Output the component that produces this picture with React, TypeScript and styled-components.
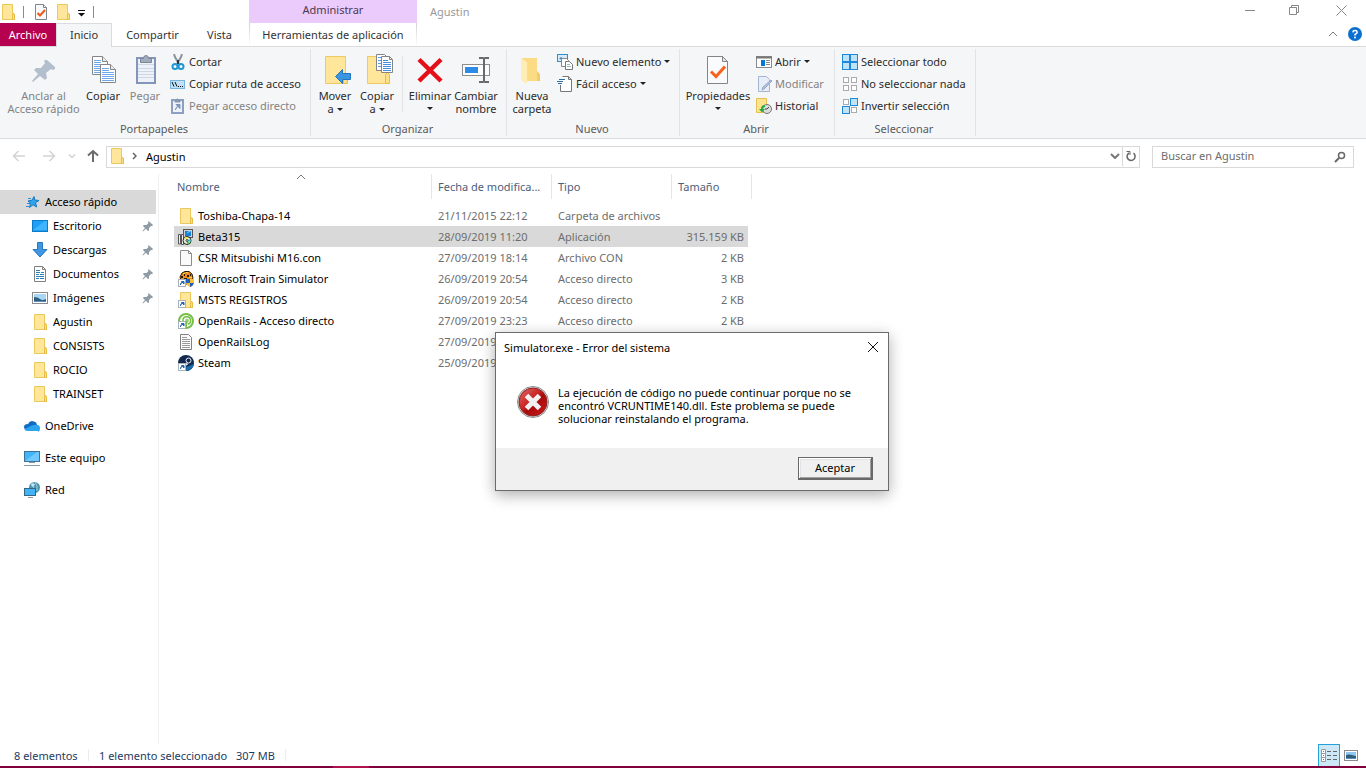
import React from 'react';
import styled, { createGlobalStyle, css } from 'styled-components';

const font = '"Noto Sans", "Open Sans", sans-serif';

const Global = createGlobalStyle`
  *, *::before, *::after { box-sizing: border-box; }
  html, body { margin: 0; height: 100%; background: #fff; }
  body { font: 11px/13px ${font}; color: #000; }
  #root { min-height: 100%; }
  button { font: inherit; color: inherit; background: none; border: 0; padding: 0; margin: 0; cursor: default; }
  a { color: inherit; text-decoration: none; cursor: default; }
  svg { display: block; flex: none; }
`;

/* ---------- window frame ---------- */

const Window = styled.div`
  display: flex;
  flex-direction: column;
  min-height: 100vh;
  position: relative;
  overflow: hidden;
  background: #fff;
`;

const Head = styled.header`
  display: flex;
  height: 46px;
`;

const HeadLeft = styled.div`
  display: flex;
  flex-direction: column;
  width: 249px;
`;

const QuickBar = styled.div`
  display: flex;
  align-items: center;
  height: 23px;
`;

const QuickButton = styled.button<{ $gap?: number }>`
  margin-left: ${(p) => p.$gap ?? 0}px;
`;

const QuickSep = styled.span<{ $gap: number }>`
  width: 1px;
  height: 12px;
  margin-left: ${(p) => p.$gap}px;
  background: #8a8a8a;
`;

const Tabs = styled.div`
  display: flex;
  height: 24px;
  margin-bottom: -1px;
  z-index: 1;
`;

const Tab = styled.button<{ $kind?: 'file' | 'active'; $width: number }>`
  width: ${(p) => p.$width}px;
  height: 23px;
  color: #333;
  ${(p) =>
    p.$kind === 'file' &&
    css`
      background: #b60050;
      color: #fff;
    `}
  ${(p) =>
    p.$kind === 'active' &&
    css`
      height: 24px;
      padding-bottom: 2px;
      background: #f5f6f7;
      border: 1px solid #dadbdc;
      border-bottom: 0;
    `}
`;

const ContextTab = styled.div`
  width: 168px;
  display: flex;
  flex-direction: column;
`;

const ContextTitle = styled.div`
  height: 23px;
  background: #ebcbfb;
  color: #4a3a52;
  text-align: center;
  line-height: 19px;
`;

const ContextButton = styled.button`
  height: 23px;
  color: #333;
  border: solid transparent;
  border-width: 0 1px;
  border-image: linear-gradient(#cfcfcf, #f7f7f7 80%, #fff) 1;
`;

const HeadRight = styled.div`
  flex: 1;
  display: flex;
  flex-direction: column;
`;

const Caption = styled.div`
  display: flex;
  justify-content: space-between;
  height: 23px;
  padding-left: 13px;
`;

const CaptionTitle = styled.h1`
  margin: 0;
  font-size: 11px;
  font-weight: 400;
  line-height: 23px;
  color: #999;
`;

const CaptionButtons = styled.div`
  display: flex;
`;

const CaptionButton = styled.button`
  width: 44px;
  height: 20px;
  display: grid;
  place-items: center;
  &:last-child { width: 50px; }
`;

const RibbonTools = styled.div`
  display: flex;
  justify-content: flex-end;
  align-items: center;
  gap: 10px;
  height: 23px;
  padding: 0 4px 2px 0;
`;

/* ---------- ribbon ---------- */

const Ribbon = styled.div`
  display: flex;
  height: 93px;
  padding-top: 2px;
  background: #f5f6f7;
  border: solid #dadbdc;
  border-width: 1px 0;
`;

const Group = styled.section<{ $width: number }>`
  display: flex;
  flex-direction: column;
  width: ${(p) => p.$width}px;
  height: 87px;
  border-right: 1px solid #e2e3e4;
`;

const GroupBody = styled.div<{ $pad: number }>`
  display: flex;
  height: 68px;
  padding: 2px 0 0 ${(p) => p.$pad}px;
`;

const GroupLabel = styled.div`
  height: 19px;
  padding-right: 2px;
  line-height: 23px;
  text-align: center;
  color: #5a5a5a;
`;

const Big = styled.button<{ $width: number; $off?: boolean }>`
  display: flex;
  flex-direction: column;
  align-items: center;
  gap: 3px;
  width: ${(p) => p.$width}px;
  padding-top: 3px;
  color: ${(p) => (p.$off ? '#838383' : '#2b2b2b')};
  white-space: nowrap;
`;

const BigLabel = styled.span`
  line-height: 13px;
`;

const Divider = styled.span`
  width: 1px;
  height: 56px;
  margin: 5px 4px 0;
  background: #e2e3e4;
`;

const SmallList = styled.div`
  display: flex;
  flex-direction: column;
  align-items: flex-start;
  margin-left: 4px;
`;

const Small = styled.button<{ $off?: boolean }>`
  display: flex;
  align-items: center;
  gap: 3px;
  height: 22px;
  color: ${(p) => (p.$off ? '#838383' : '#2b2b2b')};
  white-space: nowrap;
`;

const SmallLabel = styled.span`
  padding-bottom: 2px;
`;

const Caret = styled.i`
  display: inline-block;
  vertical-align: middle;
  margin: 0 0 2px 3px;
  border: solid transparent;
  border-width: 3px 3px 0;
  border-top-color: #222;
`;

const LoneCaret = styled(Caret)`
  display: block;
  width: 6px;
  margin: 5px auto 0;
`;

/* ---------- address row ---------- */

const AddressRow = styled.div`
  display: flex;
  align-items: center;
  height: 35px;
  padding: 0 12px;
`;

const NavButtons = styled.div`
  display: flex;
  align-items: center;
  width: 94px;
`;

const NavButton = styled.button<{ $width: number }>`
  width: ${(p) => p.$width}px;
  padding-bottom: 2px;
`;

const AddressBox = styled.div`
  flex: 1;
  display: flex;
  align-items: center;
  height: 22px;
  border: 1px solid #d9d9d9;
  padding: 0 0 1px 2px;
`;

const Crumb = styled.a`
  flex: 1;
  padding-left: 9px;
`;

const BoxButton = styled.button<{ $line?: boolean }>`
  width: ${(p) => (p.$line ? 17 : 15)}px;
  height: 20px;
  display: grid;
  place-items: center;
  border-left: ${(p) => (p.$line ? '1px solid #d9d9d9' : '0')};
`;

const SearchBox = styled.label`
  display: flex;
  align-items: center;
  width: 202px;
  height: 22px;
  margin-left: 12px;
  padding: 0 7px 0 8px;
  border: 1px solid #d9d9d9;
`;

const SearchInput = styled.input`
  flex: 1;
  min-width: 0;
  height: 20px;
  border: 0;
  padding: 0 0 2px;
  outline: 0;
  font: 11px/16px ${font};
  background: none;
  &::placeholder { color: #6d6d6d; opacity: 1; }
`;

/* ---------- body ---------- */

const Body = styled.div`
  flex: 1;
  display: flex;
`;

const Side = styled.nav`
  width: 159px;
  padding-top: 16px;
  border-right: 1px solid #f0f0f0;
`;

const SideLink = styled.a<{ $level: number; $selected?: boolean; $apart?: boolean }>`
  display: flex;
  align-items: center;
  gap: 5px;
  height: 24px;
  width: 156px;
  margin-top: ${(p) => (p.$apart ? 8 : 0)}px;
  padding: 0 2px 0 ${(p) => 24 + p.$level * 8}px;
  background: ${(p) => (p.$selected ? '#d9d9d9' : 'transparent')};
`;

const SideText = styled.span`
  flex: 1;
  padding-bottom: 2px;
  white-space: nowrap;
`;

const Main = styled.main`
  flex: 1;
  padding-left: 15px;
`;

const Files = styled.table`
  width: 574px;
  border-collapse: collapse;
  table-layout: fixed;
`;

const Th = styled.th<{ $width: number; $first?: boolean; $last?: boolean }>`
  position: relative;
  width: ${(p) => p.$width}px;
  height: 26px;
  padding: 0 0 2px ${(p) => (p.$first ? 3 : 6)}px;
  font-weight: 400;
  text-align: left;
  color: #4c607a;
  white-space: nowrap;
  &::after {
    content: '';
    position: absolute;
    top: 0;
    right: ${(p) => (p.$last ? -4 : 0)}px;
    width: 1px;
    height: 25px;
    background: #e5e5e5;
  }
`;

const SortMark = styled.span`
  position: absolute;
  top: 0;
  left: 0;
  right: 4px;
  display: grid;
  justify-content: center;
`;

const Tbody = styled.tbody`
  &::before { content: ''; display: block; height: 5px; }
`;

const Row = styled.tr<{ $selected?: boolean }>`
  height: 21px;
  background: ${(p) => (p.$selected ? '#d9d9d9' : 'transparent')};
`;

const Td = styled.td<{ $right?: boolean }>`
  padding: 0 4px 0 6px;
  color: #6d6d6d;
  text-align: ${(p) => (p.$right ? 'right' : 'left')};
  white-space: nowrap;
`;

const NameCell = styled.td`
  padding: 0 0 0 4px;
`;

const NameWrap = styled.div`
  display: flex;
  align-items: center;
  gap: 4px;
  height: 21px;
`;

/* ---------- status bar ---------- */

const Status = styled.footer`
  display: flex;
  align-items: center;
  height: 22px;
  padding: 0 4px 0 14px;
  color: #1e3a5f;
`;

const StatusText = styled.span<{ $width: number }>`
  width: ${(p) => p.$width}px;
  white-space: nowrap;
`;

const StatusSep = styled.span`
  width: 1px;
  height: 12px;
  margin-right: 10px;
  background: #ececec;
`;

const ViewButtons = styled.div`
  display: flex;
  margin-left: auto;
`;

const ViewButton = styled.button<{ $on?: boolean }>`
  display: grid;
  place-items: center;
  width: 22px;
  height: 22px;
  background: ${(p) => (p.$on ? '#cce8f6' : 'transparent')};
  border: ${(p) => (p.$on ? '1px solid #26a0da' : '0')};
  border-bottom: 0;
`;

const TaskEdge = styled.div`
  height: 2px;
  background: linear-gradient(90deg, #7f003c 333px, #b1104f 333px, #b1104f 369px, #7f003c 369px);
`;

/* ---------- dialog ---------- */

const Dialog = styled.div`
  position: absolute;
  left: 495px;
  top: 332px;
  width: 394px;
  display: flex;
  flex-direction: column;
  background: #fff;
  border: 1px solid #6b6b6b;
  box-shadow: 0 4px 14px rgba(0, 0, 0, 0.32);
`;

const DialogHead = styled.div`
  display: flex;
  align-items: center;
  justify-content: space-between;
  height: 28px;
  padding: 0 9px 0 8px;
`;

const DialogTitle = styled.h2`
  margin: 0;
  font-size: 11px;
  font-weight: 400;
`;

const DialogBody = styled.div`
  display: flex;
  gap: 9px;
  height: 87px;
  padding: 25px 21px 0;
`;

const Message = styled.p`
  margin: 0;
  width: 310px;
  line-height: 13px;
  white-space: nowrap;
`;

const DialogFoot = styled.div`
  display: flex;
  justify-content: flex-end;
  height: 42px;
  padding: 9px 15px 0;
  background: #f0f0f0;
`;

const OkButton = styled.button`
  width: 75px;
  height: 23px;
  padding-bottom: 1px;
  background: #f0f0f0;
  border: 1px solid #696969;
  border-right-width: 2px;
  border-bottom-width: 2px;
  box-shadow: inset 1px 1px #fff, inset -1px -1px #a0a0a0, inset 2px 2px #e3e3e3;
`;

/* ---------- icons ---------- */

const LinkBadge = () => (
  <>
    <rect x=".5" y="8.5" width="7" height="7" fill="#fff" stroke="#a9b3bd" />
    <path d="M2.5 14c0-2 .6-2.7 2-2.800M3.500 10.500h2.500v2.500z" fill="#2766ad" stroke="#2766ad" />
  </>
);

const Folder = ({ link }: { link?: boolean }) => (
  <svg width="16" height="16" viewBox="0 0 16 16">
    <path d="M2.5.5h10V10h2v5.500h-12z" fill="#ffe69b" stroke="#ebc85a" />
    <path d="M12.500 15.500V11l1-1.500 1 1.500v4.500z" fill="#ffe08a" stroke="#e6bd45" />
    {link && <LinkBadge />}
  </svg>
);

const CheckDoc = () => (
  <svg width="16" height="18" viewBox="0 0 16 18">
    <path d="M2.500 1.500h8l3 3v12h-11z" fill="#f8f9fa" stroke="#7e858c" />
    <path d="M10.500 1.500v3h3" fill="#dfe3e8" stroke="#7e858c" />
    <path d="M4.500 10l2.500 2.500L12 7" fill="none" stroke="#f0581a" strokeWidth="2" />
  </svg>
);

const BigPin = () => (
  <svg width="32" height="32" viewBox="0 0 32 32">
    <path d="M19 6l8 7v2l-2 1-2-1-5 4 1 5-2 2-5-4-7 6-1-1 6-7-4-4 2-2h5l4-5-1-2 1-1z" fill="#b3bfcc" />
  </svg>
);

const PageLines = ({ x, y }: { x: number; y: number }) => (
  <g transform={`translate(${x} ${y})`}>
    <path d="M.5.5h10l5 5v13H.5z" fill="#fff" stroke="#858585" />
    <path d="M10.500.5v5h5" fill="#e9e9e9" stroke="#858585" />
    <path d="M2 4.500h7M2 6.500h7M2 8.500h12M2 10.500h12M2 12.500h12M2 14.500h12M2 16.500h12" stroke="#6fa8ea" />
  </g>
);

const BigCopy = () => (
  <svg width="32" height="32" viewBox="0 0 32 32">
    <PageLines x={5} y={2} />
    <PageLines x={13} y={10} />
  </svg>
);

const BigPaste = () => (
  <svg width="32" height="32" viewBox="0 0 32 32">
    <rect x="8" y="4" width="18" height="25" fill="#eef2f8" stroke="#8395ba" strokeWidth="2" />
    <path d="M9 10.500h16M9 14.500h16M9 17.500h16M9 20.500h16M9 23.500h16" stroke="#cdd8e6" />
    <path d="M11.500 4.500h3q0-3 2.500-3t2.500 3h3v4h-11z" fill="#a0abbd" stroke="#7c8798" />
  </svg>
);

const Scissors = () => (
  <svg width="16" height="16" viewBox="0 0 16 16">
    <path d="M4 0l1 3 4 7M12 0l-1 3-4 7" fill="none" stroke="#8a949e" strokeWidth="2" />
    <path d="M8 6v4" stroke="#333" strokeWidth="2" />
    <ellipse cx="5" cy="12.500" rx="2.500" ry="2.500" fill="none" stroke="#1f97d4" strokeWidth="2" />
    <ellipse cx="11" cy="12.500" rx="2.500" ry="2.500" fill="none" stroke="#1f97d4" strokeWidth="2" />
  </svg>
);

const PathIcon = () => (
  <svg width="16" height="16" viewBox="0 0 16 16">
    <rect x=".5" y="4.500" width="14" height="8" fill="#bfe2fa" stroke="#7ab4dc" />
    <path d="M2 6l2 4.500M5 6l2 4.500" stroke="#111" fill="none" />
    <path d="M8 10.500h1M10 10.500h1M12 10.500h1" stroke="#111" />
  </svg>
);

const PasteLink = () => (
  <svg width="16" height="16" viewBox="0 0 16 16">
    <rect x="2" y="2" width="11" height="13" fill="#eef2f8" stroke="#8da0c4" strokeWidth="2" />
    <path d="M5 3h1.500q0-2 1-2t1 2H10v1H5z" fill="#9aa6ba" stroke="#8390a6" />
    <path d="M5.500 12c0-2 1-3 2.500-3.500M6 6.500h4V10.500z" fill="#7f94ba" stroke="#7f94ba" />
  </svg>
);

const BigFolderShape = () => (
  <g transform="translate(6 2)">
    <path d="M.5.5h20v27H.5z" fill="#ffe69b" stroke="#edcb62" />
    <path d="M18.500 27.500V18.500l2-2 2 2v9z" fill="#ffdf85" stroke="#e6bd45" />
  </g>
);

const BigMove = () => (
  <svg width="32" height="32" viewBox="0 0 32 32">
    <BigFolderShape />
    <path d="M16.500 22.500l7-7v4h8v6h-8v4z" fill="#3a96e0" stroke="#2576c0" />
  </svg>
);

const BigCopyTo = () => (
  <svg width="32" height="32" viewBox="0 0 32 32">
    <BigFolderShape />
    <path d="M15.500.5h8l2 2v14h-10z" fill="#fff" stroke="#858585" />
    <path d="M17 3.500h3M17 6.500h3M17 9.500h3M17 12.500h3" stroke="#5d9be0" />
    <path d="M20.500 2.500h8l3 3v13h-11z" fill="#fff" stroke="#858585" />
    <path d="M28.500 2.500v3h3" fill="none" stroke="#858585" />
    <path d="M22 6.500h5M22 8.500h8M22 10.500h8M22 12.500h8M22 14.500h8M22 16.500h8" fill="none" stroke="#4a8fdd" />
  </svg>
);

const BigDelete = () => (
  <svg width="32" height="32" viewBox="0 0 32 32">
    <path d="M5 5.500L27 27M27 5.500L5 27" stroke="#e50f19" strokeWidth="4.500" />
  </svg>
);

const BigRename = () => (
  <svg width="32" height="32" viewBox="0 0 32 32">
    <rect x="2.500" y="10.500" width="27" height="11" fill="#fff" stroke="#8d8d8d" />
    <rect x="5" y="13" width="13" height="6" fill="#2b8be6" />
    <path d="M19 4h4q1 0 1 1.500Q24 4 25 4h4M24 4v24M19 28h4q1 0 1-1.500Q24 28 25 28h4" fill="none" stroke="#6a6a6a" strokeWidth="2" />
  </svg>
);

const BigNewFolder = () => (
  <svg width="32" height="32" viewBox="0 0 32 32">
    <path d="M6 4h15v13l3 3v7H11z" fill="#fbdc85" />
    <path d="M5 4l6 4v22l-6-4z" fill="#ffedb5" />
    <path d="M21 17l3 4v6h-3z" fill="#f3cb66" />
  </svg>
);

const NewItem = () => (
  <svg width="16" height="16" viewBox="0 0 16 16">
    <rect x=".5" y=".5" width="10" height="7" fill="#d5ebfb" stroke="#2f8fc9" />
    <path d="M2 5l2-2 4 3z" fill="#3d7fa3" />
    <path d="M4.500 4.500h5l2 2v6h-7z" fill="#fff" stroke="#888" />
    <path d="M8.500 7.500h4l3 3v5h-7z" fill="#fff" stroke="#777" />
    <path d="M10 10.500h3M10 12.500h4" stroke="#9bb" />
  </svg>
);

const EasyAccess = () => (
  <svg width="16" height="16" viewBox="0 0 16 16">
    <path d="M5.500.5h6l3 3v12h-11V9M11.500.5v3h3" fill="#fff" stroke="#777" />
    <path d="M2 3.500h6M0 5.500h6M1 7.500h4" stroke="#2c6ea8" />
  </svg>
);

const BigProps = () => (
  <svg width="32" height="32" viewBox="0 0 32 32">
    <path d="M5.500 2.500h15l5 5v22h-20z" fill="#fafbfc" stroke="#858585" />
    <path d="M20.500 2.500v5h5z" fill="#e4e4e4" stroke="#858585" />
    <path d="M9 17.500l5 5 9-10" fill="none" stroke="#f7631c" strokeWidth="3" />
  </svg>
);

const OpenIcon = () => (
  <svg width="16" height="16" viewBox="0 0 16 16">
    <rect x=".5" y="2.500" width="15" height="11" fill="#fff" stroke="#8a8a8a" />
    <path d="M0 3.500h16" stroke="#777" strokeWidth="2" />
    <rect x="5" y="6" width="4" height="6" fill="#0078d7" />
    <path d="M10 6.500h4M10 8.500h4M10 10.500h4" stroke="#888" />
  </svg>
);

const EditIcon = () => (
  <svg width="16" height="16" viewBox="0 0 16 16">
    <path d="M2.500.5h8l3 3v12h-11z" fill="#e8eef8" stroke="#a5b5d2" />
    <path d="M6 14l1-3 8-7 1 1-8 8z" fill="#b5c4de" stroke="#93a7cb" />
  </svg>
);

const HistoryIcon = () => (
  <svg width="16" height="16" viewBox="0 0 16 16">
    <path d="M.5.5h10V7h2v7.500H.5z" fill="#ffe28d" stroke="#e6c154" />
    <circle cx="11" cy="11" r="4.500" fill="#ddd" stroke="#777" />
    <path d="M11 11l2-2M11 11H9" stroke="#444" />
    <path d="M9 7Q5 7 5 11H3l3 3.500L9 11H7q0-2 2-2z" fill="#27a844" />
  </svg>
);

const Tile = ({ x, y, s, on }: { x: number; y: number; s: number; on?: boolean }) => (
  <rect x={x + 0.5} y={y + 0.5} width={s} height={s} fill={on ? '#bfe3fb' : '#fff'} stroke={on ? '#1e88d8' : '#aaa'} />
);

const SelectAll = () => (
  <svg width="16" height="16" viewBox="0 0 16 16">
    <Tile x={0} y={0} s={7} on />
    <Tile x={8} y={0} s={7} on />
    <Tile x={0} y={8} s={7} on />
    <Tile x={8} y={8} s={7} on />
  </svg>
);

const SelectNone = () => (
  <svg width="16" height="16" viewBox="0 0 16 16">
    <Tile x={1} y={1} s={5} />
    <Tile x={9} y={1} s={5} />
    <Tile x={1} y={9} s={5} />
    <Tile x={9} y={9} s={5} />
  </svg>
);

const SelectInvert = () => (
  <svg width="16" height="16" viewBox="0 0 16 16">
    <Tile x={1} y={1} s={5} />
    <Tile x={8} y={0} s={7} on />
    <Tile x={0} y={8} s={7} on />
    <Tile x={9} y={9} s={5} />
  </svg>
);

const Arrow = ({ d, color, w = 14 }: { d: string; color: string; w?: number }) => (
  <svg width={w} height="14" viewBox={`0 0 ${w} 14`}>
    <path d={d} fill="none" stroke={color} strokeWidth={color === '#6b6b6b' ? 2 : 1.5} />
  </svg>
);

const Star = () => (
  <svg width="16" height="16" viewBox="0 0 16 16">
    <path d="M10 2.500l.8 3.500 4.200.500-3.500 2.200 1.200 4.300-3.700-2.200-3.500 2.700 1-4.300L4 7l4-.800z" fill="#2fa4ee" stroke="#1579c4" />
    <path d="M4 4.500h3M3 9.500h3M2 12.500h3" stroke="#2b8fd8" />
  </svg>
);

const Desktop = () => (
  <svg width="16" height="16" viewBox="0 0 16 16">
    <rect x=".5" y="2.500" width="15" height="11" fill="#1aa0f8" stroke="#0f7ac4" />
    <path d="M1 12L13 3h2v9z" fill="#3fb4ff" />
  </svg>
);

const Download = () => (
  <svg width="16" height="16" viewBox="0 0 16 16">
    <path d="M5.500.5h5v7h4.500L8 15 1 7.500h4.500z" fill="#3f96e2" stroke="#2a77bf" />
  </svg>
);

const Documents = () => (
  <svg width="16" height="16" viewBox="0 0 16 16">
    <path d="M2.500.5h8l3 3v12h-11z" fill="#fff" stroke="#808080" />
    <path d="M10.500.5v3h3" fill="none" stroke="#808080" />
    <path d="M4 4.500h4M4 6.500h4M9 6.500h3M4 8.500h3M8 8.500h4M4 10.500h8M4 12.500h3M8 12.500h4" stroke="#2a80b9" />
  </svg>
);

const Picture = () => (
  <svg width="16" height="16" viewBox="0 0 16 16">
    <rect x="1.500" y="3.500" width="13" height="10" fill="#fff" stroke="#8b8b8b" />
    <rect x="3" y="5" width="10" height="7" fill="#8fc7f0" />
    <path d="M3 8q3-1 6 0t4 1v2H3z" fill="#2f5d7c" />
    <path d="M3 11h10v1H3z" fill="#5a8fc0" />
  </svg>
);

const WidePicture = () => (
  <svg width="16" height="16" viewBox="0 0 16 16">
    <rect x=".5" y="2.500" width="15" height="11" fill="#fff" stroke="#8b8b8b" />
    <rect x="2" y="4" width="12" height="8" fill="#a9d6f5" />
    <path d="M2 7q4 0 6 2t6 0v2H2z" fill="#2f5d7c" />
    <path d="M2 11h12v1H2z" fill="#5a8fc0" />
  </svg>
);

const SmallPin = () => (
  <svg width="12" height="12" viewBox="0 0 12 12">
    <path d="M6.500 1L11 5l-1 1.200L9 6 7 8v2.500L6 11 4 8.800 1 11.500.5 11 3 8 .8 6 2 5h2.500L6.500 3 6 2z" fill="#8e9aa6" />
  </svg>
);

const OneDrive = () => (
  <svg width="16" height="16" viewBox="0 0 16 16">
    <path d="M4 12Q0 12 0 9t4-3q2-4 6-2.500 2.500.5 3 3L8 12z" fill="#0f6cc4" />
    <path d="M3 13Q1 13 .5 11L9 7q7-1.500 7 3t-3 3z" fill="#2ba5ee" />
  </svg>
);

const Computer = () => (
  <svg width="16" height="16" viewBox="0 0 16 16">
    <rect x=".5" y="1.500" width="15" height="10" fill="#41b4fb" stroke="#3b7296" />
    <path d="M1 11L13 2h2v9z" fill="#6fc9ff" />
    <path d="M5 12.500h6M0 15.500h16" stroke="#8798a6" />
  </svg>
);

const Network = () => (
  <svg width="16" height="16" viewBox="0 0 16 16">
    <circle cx="10.500" cy="5.500" r="5.500" fill="#4b94ad" />
    <path d="M7 2q3 1 3 5M11 0q3 3 2 9" stroke="#9fd0e2" fill="none" />
    <path d="M7 2q3-2 4 1L8 5z" fill="#c4e6f2" />
    <rect x=".5" y="6.500" width="11" height="7" fill="#43b3f5" stroke="#33678a" />
    <path d="M4 15.500h5" stroke="#8798a6" />
  </svg>
);

const Installer = () => (
  <svg width="16" height="16" viewBox="0 0 16 16">
    <rect x="5.500" y=".5" width="9" height="8" fill="#d4d4d4" stroke="#555" />
    <rect x="7" y="2" width="6" height="5" fill="#1683d8" />
    <path d="M8 5l3-3h2z" fill="#8fe0ff" />
    <path d="M.5 5.500h2V15h-2zM3.500 5.500h2v10h-2z" fill="#eee" stroke="#555" />
    <circle cx="9" cy="11.500" r="4" fill="#e6ead8" stroke="#222" />
    <path d="M9 11.500l-3-2.500a4 4 0 0 1 3-1z" fill="#f4e94a" />
    <path d="M9 11.500l3 2.500a4 4 0 0 1-3 1z" fill="#3ed13e" />
    <path d="M9 11.500l3.500-1.500v3z" fill="#1fd6e6" />
    <circle cx="9" cy="11.500" r="1" fill="#fff" stroke="#333" />
  </svg>
);

const BlankFile = () => (
  <svg width="16" height="16" viewBox="0 0 16 16">
    <path d="M2.500.5h8l3 3v12h-11z" fill="#fafafa" stroke="#8d8d8d" />
    <path d="M10.500.5v3h3" fill="none" stroke="#8d8d8d" />
  </svg>
);

const TextFile = () => (
  <svg width="16" height="16" viewBox="0 0 16 16">
    <path d="M2.500.5h8l3 3v12h-11z" fill="#fafafa" stroke="#808080" />
    <path d="M4 3.500h5M4 5.500h8M4 7.500h8M4 9.500h8M4 11.500h8M4 13.500h8" stroke="#9a9a9a" />
  </svg>
);

const TrainIcon = () => (
  <svg width="16" height="16" viewBox="0 0 16 16">
    <path d="M2 6l2-4 3-1.500h4l3 2.500 1 4-3 6H4z" fill="#e98a1c" stroke="#2b1a08" />
    <path d="M3 5h2v2H3zM6 3h1v2H6zM9 4h2v2H9zM12 3h1v2h-1zM6 7h3v1H6z" fill="#2a1a0a" />
    <path d="M5 2.500h2M8 1.500h2M11 6.500h3" stroke="#f9d648" />
    <path d="M8 8h8v4q-1 3-4 4-3-1-4-4z" fill="#f6c431" />
    <path d="M8 8h4v4H8zM12 12h4q-1 3-4 4z" fill="#1f5fbf" />
    <LinkBadge />
  </svg>
);

const OpenRails = () => (
  <svg width="16" height="16" viewBox="0 0 16 16">
    <circle cx="8" cy="8" r="7" fill="#fff" stroke="#74bf44" strokeWidth="2" />
    <path d="M5 8a3.800 3.800 0 1 1 5 3.200" fill="none" stroke="#74bf44" strokeWidth="1.500" />
    <circle cx="9" cy="7.500" r="2" fill="#9ed37a" />
    <path d="M9 8l-1 6" stroke="#74bf44" strokeWidth="1.500" />
    <LinkBadge />
  </svg>
);

const Steam = () => (
  <svg width="16" height="16" viewBox="0 0 16 16">
    <circle cx="8" cy="8" r="8" fill="#12284f" />
    <path d="M8 16a8 8 0 0 0 8-7L8 12z" fill="#1b6aa5" />
    <circle cx="10.500" cy="5.500" r="2.500" fill="#12284f" stroke="#e9eef5" strokeWidth="1" />
    <path d="M9.500 8.500L6 11" stroke="#e9eef5" strokeWidth="2" />
    <LinkBadge />
  </svg>
);

const ErrorIcon = () => (
  <svg width="32" height="32" viewBox="0 0 32 32">
    <defs>
      <linearGradient id="err" x1="0" y1="0" x2="1" y2="1">
        <stop offset="0" stopColor="#e0706c" />
        <stop offset=".45" stopColor="#c8201f" />
        <stop offset=".55" stopColor="#a80a0c" />
        <stop offset="1" stopColor="#d01a18" />
      </linearGradient>
    </defs>
    <circle cx="16" cy="16" r="15.500" fill="#e3e3e3" stroke="#8c8c8c" />
    <circle cx="16" cy="16" r="14" fill="url(#err)" stroke="#8d2220" />
    <path d="M9.500 9.500l13 13M22.500 9.500l-13 13" stroke="#f2f2f2" strokeWidth="5" />
  </svg>
);

const Chevron = ({ up, color = '#777', bold }: { up?: boolean; color?: string; bold?: boolean }) => (
  <svg width="10" height="6" viewBox="0 0 10 6">
    <path d={up ? 'M1 5l4-4 4 4' : 'M1 1l4 4 4-4'} fill="none" stroke={color} strokeWidth={bold ? 2 : 1} />
  </svg>
);

/* ---------- data ---------- */

const places: { text: string; icon: React.ReactNode; level: number; pin?: boolean; selected?: boolean; apart?: boolean }[] = [
  { text: 'Acceso rápido', icon: <Star />, level: 0, selected: true },
  { text: 'Escritorio', icon: <Desktop />, level: 1, pin: true },
  { text: 'Descargas', icon: <Download />, level: 1, pin: true },
  { text: 'Documentos', icon: <Documents />, level: 1, pin: true },
  { text: 'Imágenes', icon: <WidePicture />, level: 1, pin: true },
  { text: 'Agustin', icon: <Folder />, level: 1 },
  { text: 'CONSISTS', icon: <Folder />, level: 1 },
  { text: 'ROCIO', icon: <Folder />, level: 1 },
  { text: 'TRAINSET', icon: <Folder />, level: 1 },
  { text: 'OneDrive', icon: <OneDrive />, level: 0, apart: true },
  { text: 'Este equipo', icon: <Computer />, level: 0, apart: true },
  { text: 'Red', icon: <Network />, level: 0, apart: true },
];

const files = [
  { name: 'Toshiba-Chapa-14', icon: <Folder />, date: '21/11/2015 22:12', type: 'Carpeta de archivos', size: '' },
  { name: 'Beta315', icon: <Installer />, date: '28/09/2019 11:20', type: 'Aplicación', size: '315.159 KB', selected: true },
  { name: 'CSR Mitsubishi M16.con', icon: <BlankFile />, date: '27/09/2019 18:14', type: 'Archivo CON', size: '2 KB' },
  { name: 'Microsoft Train Simulator', icon: <TrainIcon />, date: '26/09/2019 20:54', type: 'Acceso directo', size: '3 KB' },
  { name: 'MSTS REGISTROS', icon: <Folder link />, date: '26/09/2019 20:54', type: 'Acceso directo', size: '2 KB' },
  { name: 'OpenRails - Acceso directo', icon: <OpenRails />, date: '27/09/2019 23:23', type: 'Acceso directo', size: '2 KB' },
  { name: 'OpenRailsLog', icon: <TextFile />, date: '27/09/2019', type: '', size: '' },
  { name: 'Steam', icon: <Steam />, date: '25/09/2019', type: '', size: '' },
];

export default function App() {
  return (
    <>
      <Global />
      <Window>
        <Head>
          <HeadLeft>
            <QuickBar>
              <QuickButton aria-label="Explorador"><Folder /></QuickButton>
              <QuickSep $gap={7} />
              <QuickButton $gap={9} aria-label="Propiedades"><CheckDoc /></QuickButton>
              <QuickButton $gap={6} aria-label="Nueva carpeta"><Folder /></QuickButton>
              <QuickButton $gap={6} aria-label="Personalizar">
                <svg width="9" height="10" viewBox="0 0 9 10">
                  <path d="M1 3.500h7" stroke="#111" />
                  <path d="M1 6h7L4.500 9.500z" fill="#111" />
                </svg>
              </QuickButton>
              <QuickSep $gap={7} />
            </QuickBar>
            <Tabs>
              <Tab $kind="file" $width={56}>Archivo</Tab>
              <Tab $kind="active" $width={56}>Inicio</Tab>
              <Tab $width={81}>Compartir</Tab>
              <Tab $width={53}>Vista</Tab>
            </Tabs>
          </HeadLeft>
          <ContextTab>
            <ContextTitle>Administrar</ContextTitle>
            <ContextButton>Herramientas de aplicación</ContextButton>
          </ContextTab>
          <HeadRight>
            <Caption>
              <CaptionTitle>Agustin</CaptionTitle>
              <CaptionButtons>
                <CaptionButton aria-label="Minimizar">
                  <svg width="11" height="11" viewBox="0 0 11 11"><path d="M0 5.500h10" stroke="#888" /></svg>
                </CaptionButton>
                <CaptionButton aria-label="Restaurar">
                  <svg width="11" height="11" viewBox="0 0 11 11"><path d="M.5 2.500h7v7h-7zM2.500 2.500v-2h7v7h-2" fill="none" stroke="#888" /></svg>
                </CaptionButton>
                <CaptionButton aria-label="Cerrar">
                  <svg width="11" height="11" viewBox="0 0 11 11"><path d="M.5.5l10 10M10.500.5l-10 10" stroke="#888" /></svg>
                </CaptionButton>
              </CaptionButtons>
            </Caption>
            <RibbonTools>
              <button aria-label="Minimizar la cinta"><Chevron up /></button>
              <button aria-label="Ayuda">
                <svg width="14" height="14" viewBox="0 0 14 14">
                  <circle cx="7" cy="7" r="7" fill="#0a6fd0" />
                  <path d="M4.800 5.300Q5 3.500 7 3.500t2.200 1.700Q9.200 6.400 7 7.500v1" fill="none" stroke="#fff" strokeWidth="1.500" />
                  <circle cx="7" cy="10.500" r="1" fill="#fff" />
                </svg>
              </button>
            </RibbonTools>
          </HeadRight>
        </Head>

        <Ribbon>
          <Group $width={311}>
            <GroupBody $pad={5}>
              <Big $width={77} $off><BigPin /><BigLabel>Anclar al<br />Acceso rápido</BigLabel></Big>
              <Big $width={42}><BigCopy /><BigLabel>Copiar</BigLabel></Big>
              <Big $width={42} $off><BigPaste /><BigLabel>Pegar</BigLabel></Big>
              <SmallList>
                <Small><Scissors /><SmallLabel>Cortar</SmallLabel></Small>
                <Small><PathIcon /><SmallLabel>Copiar ruta de acceso</SmallLabel></Small>
                <Small $off><PasteLink /><SmallLabel>Pegar acceso directo</SmallLabel></Small>
              </SmallList>
            </GroupBody>
            <GroupLabel>Portapapeles</GroupLabel>
          </Group>
          <Group $width={196}>
            <GroupBody $pad={3}>
              <Big $width={42}><BigMove /><BigLabel>Mover<br />a<Caret /></BigLabel></Big>
              <Big $width={42}><BigCopyTo /><BigLabel>Copiar<br />a<Caret /></BigLabel></Big>
              <Divider />
              <Big $width={46}><BigDelete /><BigLabel>Eliminar<LoneCaret /></BigLabel></Big>
              <Big $width={46}><BigRename /><BigLabel>Cambiar<br />nombre</BigLabel></Big>
            </GroupBody>
            <GroupLabel>Organizar</GroupLabel>
          </Group>
          <Group $width={173}>
            <GroupBody $pad={4}>
              <Big $width={42}><BigNewFolder /><BigLabel>Nueva<br />carpeta</BigLabel></Big>
              <SmallList>
                <Small><NewItem /><SmallLabel>Nuevo elemento<Caret /></SmallLabel></Small>
                <Small><EasyAccess /><SmallLabel>Fácil acceso<Caret /></SmallLabel></Small>
              </SmallList>
            </GroupBody>
            <GroupLabel>Nuevo</GroupLabel>
          </Group>
          <Group $width={155}>
            <GroupBody $pad={4}>
              <Big $width={68}><BigProps /><BigLabel>Propiedades<LoneCaret /></BigLabel></Big>
              <SmallList>
                <Small><OpenIcon /><SmallLabel>Abrir<Caret /></SmallLabel></Small>
                <Small $off><EditIcon /><SmallLabel>Modificar</SmallLabel></Small>
                <Small><HistoryIcon /><SmallLabel>Historial</SmallLabel></Small>
              </SmallList>
            </GroupBody>
            <GroupLabel>Abrir</GroupLabel>
          </Group>
          <Group $width={141}>
            <GroupBody $pad={3}>
              <SmallList>
                <Small><SelectAll /><SmallLabel>Seleccionar todo</SmallLabel></Small>
                <Small><SelectNone /><SmallLabel>No seleccionar nada</SmallLabel></Small>
                <Small><SelectInvert /><SmallLabel>Invertir selección</SmallLabel></Small>
              </SmallList>
            </GroupBody>
            <GroupLabel>Seleccionar</GroupLabel>
          </Group>
        </Ribbon>

        <AddressRow>
          <NavButtons>
            <NavButton $width={30} aria-label="Atrás"><Arrow d="M6.500 2L1.500 7l5 5M1.500 7H13" color="#d3d3d3" /></NavButton>
            <NavButton $width={26} aria-label="Adelante"><Arrow d="M7.500 2l5 5-5 5M12.500 7H1" color="#d3d3d3" /></NavButton>
            <NavButton $width={18} aria-label="Recientes"><Arrow w={8} d="M1 5.500l3 3 3-3" color="#d3d3d3" /></NavButton>
            <NavButton $width={20} aria-label="Subir"><Arrow d="M2 6.500L7 2l5 4.500M7 2V13" color="#6b6b6b" /></NavButton>
          </NavButtons>
          <AddressBox>
            <Folder />
            <svg width="12" height="8" viewBox="0 0 12 8"><path d="M8 1l3 3-3 3" fill="none" stroke="#666" strokeWidth="1.500" /></svg>
            <Crumb href="#">Agustin</Crumb>
            <BoxButton aria-label="Ubicaciones anteriores"><Chevron bold color="#777" /></BoxButton>
            <BoxButton $line aria-label="Actualizar">
              <svg width="12" height="12" viewBox="0 0 12 12">
                <path d="M8.500 3.200a4 4 0 1 1-4.500-.2" fill="none" stroke="#666" strokeWidth="1.500" />
                <path d="M1.500 1.500H5V5" fill="none" stroke="#666" />
              </svg>
            </BoxButton>
          </AddressBox>
          <SearchBox>
            <SearchInput placeholder="Buscar en Agustin" aria-label="Buscar en Agustin" />
            <svg width="12" height="12" viewBox="0 0 12 12">
              <circle cx="7.500" cy="4.500" r="3" fill="none" stroke="#666" strokeWidth="1.500" />
              <path d="M5 7L1 11" stroke="#666" strokeWidth="2" />
            </svg>
          </SearchBox>
        </AddressRow>

        <Body>
          <Side>
            {places.map((p) => (
              <SideLink key={p.text} href="#" $level={p.level} $selected={p.selected} $apart={p.apart}>
                {p.icon}
                <SideText>{p.text}</SideText>
                {p.pin && <SmallPin />}
              </SideLink>
            ))}
          </Side>
          <Main>
            <Files>
              <thead>
                <tr>
                  <Th $width={258} $first>
                    Nombre
                    <SortMark><Chevron up /></SortMark>
                  </Th>
                  <Th $width={120}>Fecha de modifica...</Th>
                  <Th $width={120}>Tipo</Th>
                  <Th $width={76} $last>Tamaño</Th>
                </tr>
              </thead>
              <Tbody>
                {files.map((f) => (
                  <Row key={f.name} $selected={f.selected}>
                    <NameCell><NameWrap>{f.icon}{f.name}</NameWrap></NameCell>
                    <Td>{f.date}</Td>
                    <Td>{f.type}</Td>
                    <Td $right>{f.size}</Td>
                  </Row>
                ))}
              </Tbody>
            </Files>
          </Main>
        </Body>

        <Status>
          <StatusText $width={74}>8 elementos</StatusText>
          <StatusSep />
          <StatusText $width={137}>1 elemento seleccionado</StatusText>
          <StatusText $width={49}>307 MB</StatusText>
          <StatusSep />
          <ViewButtons>
            <ViewButton $on aria-label="Detalles">
              <svg width="16" height="14" viewBox="0 0 16 14">
                <path d="M.5.500h4v4h-4zM.5 4.500h4v4h-4zM.5 8.500h4v4h-4z" fill="#fff" stroke="#999" />
                <path d="M6 2.500h4M12 2.500h4M6 6.500h4M12 6.500h4M6 10.500h4M12 10.500h4" stroke="#666" />
                <path d="M2 2.500h1M2 6.500h1" stroke="#3a7fd0" />
                <path d="M2 10.500h1" stroke="#d03a3a" />
              </svg>
            </ViewButton>
            <ViewButton aria-label="Iconos grandes"><Picture /></ViewButton>
          </ViewButtons>
        </Status>
        <TaskEdge />

        <Dialog role="dialog" aria-labelledby="dialog-title">
          <DialogHead>
            <DialogTitle id="dialog-title">Simulator.exe - Error del sistema</DialogTitle>
            <button aria-label="Cerrar">
              <svg width="12" height="12" viewBox="0 0 12 12"><path d="M1 1l10 10M11 1L1 11" stroke="#111" /></svg>
            </button>
          </DialogHead>
          <DialogBody>
            <ErrorIcon />
            <Message>
              La ejecución de código no puede continuar porque no se<br />
              encontró VCRUNTIME140.dll. Este problema se puede<br />
              solucionar reinstalando el programa.
            </Message>
          </DialogBody>
          <DialogFoot>
            <OkButton>Aceptar</OkButton>
          </DialogFoot>
        </Dialog>
      </Window>
    </>
  );
}
